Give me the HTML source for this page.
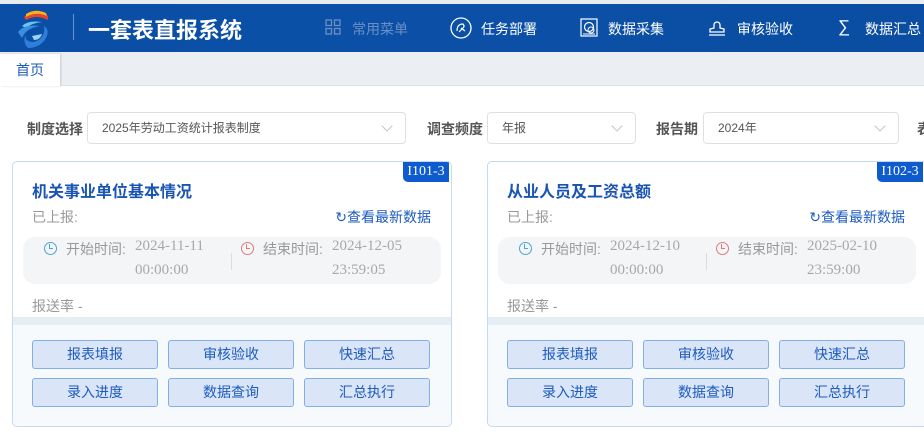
<!DOCTYPE html>
<html><head><meta charset="utf-8"><style>
*{margin:0;padding:0;box-sizing:border-box}
body{width:924px;height:437px;overflow:hidden;background:#fff;font-family:"Liberation Sans","Noto Sans CJK SC",sans-serif;position:relative}
.a{position:absolute;white-space:nowrap}
.hdr{left:0;top:4px;width:924px;height:48px;background:linear-gradient(90deg,#0a4fa5,#0b50a6 60%,#0a4da2)}
.top{left:0;top:0;width:924px;height:4px;background:#e9ecef}
.nav{color:#fff;font-size:15px;top:19px}
.tabbar{left:0;top:52px;width:924px;height:34px;background:#ebeef2;border-bottom:1px solid #dde2e8}
.tab{left:0;top:54px;width:60px;height:32px;background:#fff;color:#1d5bbf;font-size:14px;text-align:center;line-height:32px;box-shadow:1px 0 2px rgba(0,0,0,.15)}
.lbl{font-size:14px;font-weight:bold;color:#555;top:119px}
.sel{height:32px;border:1px solid #dcdfe6;border-radius:4px;top:112px;font-size:12px;color:#555;padding-left:14px;line-height:30px}
.sel:after{content:"";position:absolute;right:14px;top:9px;width:7px;height:7px;border-right:1px solid #c0c4cc;border-bottom:1px solid #c0c4cc;transform:rotate(45deg)}
.card{top:161px;width:440px;height:266px;border:1px solid #c5d9f1;border-radius:5px;overflow:hidden;background:#fff}
.card .bot{position:absolute;left:0;top:163px;width:100%;height:103px;background:#f7fafd}
.card .band{position:absolute;left:0;top:155px;width:100%;height:8px;background:#e5edf5}
.badge{position:absolute;right:2px;top:0;width:46px;height:20px;background:#0d5bcf;color:#fff;font-family:"Liberation Serif",serif;font-size:14px;text-align:center;line-height:20px;border-radius:0 0 0 5px}
.ttl{position:absolute;left:19px;top:16px;font-size:16px;font-weight:bold;color:#1a55b4}
.ys{position:absolute;left:19px;top:45px;font-size:14px;color:#999}
.lk{position:absolute;right:20px;top:45px;font-size:14px;color:#1d5bbf}
.tb{position:absolute;left:10px;top:75px;width:418px;height:47px;background:#f4f5f7;border-radius:12px}
.tl{position:absolute;font-size:14px;color:#999;top:2px}
.dt{position:absolute;font-family:"Liberation Serif",serif;font-size:15px;color:#a8a8a8}
.clk{position:absolute;top:5px;width:13px;height:13px;border-radius:50%;border:1.5px solid}
.clk:after{content:"";position:absolute;left:4px;top:1px;width:3px;height:4px;border-left:1.5px solid;border-bottom:1.5px solid;border-color:inherit}
.bs{position:absolute;left:19px;top:134px;font-size:14px;color:#999}
.btn{position:absolute;width:126px;height:29px;background:#dae6f8;border:1px solid #84aee8;border-radius:3px;color:#1d5bbf;font-size:14px;text-align:center;line-height:27px}
</style></head><body>
<div class="a top"></div>
<div class="a hdr"></div>
<svg class="a" style="left:10px;top:8px" width="46" height="42" viewBox="0 0 46 42">
<path d="M14 9 Q24 0 38 8 L38 12 Q26 6 16 12 Z" fill="#e8432b"/>
<path d="M16 6 Q25 0 36 5 L37 8 Q26 3 16 9 Z" fill="#f7b21c"/>
<path d="M12 18 Q18 12 32 14 Q22 15 16 20 Z" fill="#6cc4f0"/>
<path d="M8 24 Q14 16 30 18 Q16 20 12 30 Z" fill="#3b8ee0"/>
<path d="M18 40 Q30 40 36 30 Q40 22 34 18 Q36 30 24 34 Q14 34 16 26 Q12 34 18 40 Z" fill="#2f7fd8"/>
<path d="M22 28 L32 26 Q30 32 24 32 Z" fill="#9fd3f5"/>
</svg>
<div class="a" style="left:73px;top:14px;width:1px;height:26px;background:#6f93c8"></div>
<div class="a" style="left:88px;top:13px;color:#fff;font-size:22px;font-weight:bold">一套表直报系统</div>
<svg class="a" style="left:325px;top:19px" width="16" height="16"><g fill="none" stroke="#6b8fc4" stroke-width="1.3"><rect x="1" y="1" width="5.5" height="5.5"/><rect x="9.5" y="1" width="5.5" height="5.5"/><rect x="1" y="9.5" width="5.5" height="5.5"/><rect x="9.5" y="9.5" width="5.5" height="5.5"/></g></svg>
<div class="a nav" style="left:352px;color:#6b8fc4;font-size:14px;top:19px">常用菜单</div>
<svg class="a" style="left:450px;top:17px" width="22" height="22"><circle cx="11" cy="11" r="10" fill="none" stroke="#fff" stroke-width="1.3"/><path d="M7 14 Q7 7 13 7 Q15 9 13 11 L9 15 M11 11 L15 14" fill="none" stroke="#fff" stroke-width="1.2"/></svg>
<div class="a nav" style="left:481px;font-size:14px">任务部署</div>
<svg class="a" style="left:580px;top:18px" width="18" height="19"><rect x="1" y="1" width="16" height="17" fill="none" stroke="#fff" stroke-width="1.2"/><circle cx="9" cy="9" r="4.5" fill="none" stroke="#fff" stroke-width="1.2"/><circle cx="11" cy="12" r="3" fill="none" stroke="#fff"/><line x1="3" y1="16" x2="15" y2="16" stroke="#fff"/></svg>
<div class="a nav" style="left:608px;font-size:14px">数据采集</div>
<svg class="a" style="left:708px;top:18px" width="18" height="19"><path d="M6 10 L6 7 A3 3 0 1 1 12 7 L12 10 L16 11 L16 14 L2 14 L2 11 Z M1 17 L17 17" fill="none" stroke="#fff" stroke-width="1.3"/></svg>
<div class="a nav" style="left:737px;font-size:14px">审核验收</div>
<div class="a nav" style="left:838px;font-size:17px;top:17px">∑</div>
<div class="a nav" style="left:865px;font-size:14px">数据汇总</div>
<div class="a tabbar"></div>
<div class="a tab">首页</div>

<div class="a lbl" style="left:27px">制度选择</div>
<div class="a sel" style="left:87px;width:319px">2025年劳动工资统计报表制度</div>
<div class="a lbl" style="left:427px">调查频度</div>
<div class="a sel" style="left:487px;width:149px">年报</div>
<div class="a lbl" style="left:656px">报告期</div>
<div class="a sel" style="left:703px;width:196px">2024年</div>
<div class="a lbl" style="left:917px">表</div>

<div class="a card" style="left:12px">
<div class="band"></div><div class="bot"></div>
<div class="badge">I101-3</div>
<div class="ttl">机关事业单位基本情况</div>
<div class="ys">已上报:</div>
<div class="lk">&#x21bb;查看最新数据</div>
<div class="tb">
<div class="clk" style="left:21px;border-color:#4aa5d8"></div>
<div class="tl" style="left:43px">开始时间:</div>
<div class="dt" style="left:112px;top:1px">2024-11-11</div>
<div class="dt" style="left:112px;top:25px">00:00:00</div>
<div style="position:absolute;left:208px;top:16px;width:1px;height:17px;background:#ddd"></div>
<div class="clk" style="left:218px;border-color:#e07b7b"></div>
<div class="tl" style="left:240px">结束时间:</div>
<div class="dt" style="left:309px;top:1px">2024-12-05</div>
<div class="dt" style="left:309px;top:25px">23:59:05</div>
</div>
<div class="bs">报送率 -</div>
<div class="btn" style="left:19px;top:178px">报表填报</div>
<div class="btn" style="left:155px;top:178px">审核验收</div>
<div class="btn" style="left:291px;top:178px">快速汇总</div>
<div class="btn" style="left:19px;top:216px">录入进度</div>
<div class="btn" style="left:155px;top:216px">数据查询</div>
<div class="btn" style="left:291px;top:216px">汇总执行</div>
</div>

<div class="a card" style="left:487px;width:442px">
<div class="band"></div><div class="bot"></div>
<div class="badge" style="right:5px">I102-3</div>
<div class="ttl">从业人员及工资总额</div>
<div class="ys">已上报:</div>
<div class="lk" style="right:23px">&#x21bb;查看最新数据</div>
<div class="tb">
<div class="clk" style="left:21px;border-color:#4aa5d8"></div>
<div class="tl" style="left:43px">开始时间:</div>
<div class="dt" style="left:112px;top:1px">2024-12-10</div>
<div class="dt" style="left:112px;top:25px">00:00:00</div>
<div style="position:absolute;left:208px;top:16px;width:1px;height:17px;background:#ddd"></div>
<div class="clk" style="left:218px;border-color:#e07b7b"></div>
<div class="tl" style="left:240px">结束时间:</div>
<div class="dt" style="left:309px;top:1px">2025-02-10</div>
<div class="dt" style="left:309px;top:25px">23:59:00</div>
</div>
<div class="bs">报送率 -</div>
<div class="btn" style="left:19px;top:178px">报表填报</div>
<div class="btn" style="left:155px;top:178px">审核验收</div>
<div class="btn" style="left:291px;top:178px">快速汇总</div>
<div class="btn" style="left:19px;top:216px">录入进度</div>
<div class="btn" style="left:155px;top:216px">数据查询</div>
<div class="btn" style="left:291px;top:216px">汇总执行</div>
</div>
</body></html>
